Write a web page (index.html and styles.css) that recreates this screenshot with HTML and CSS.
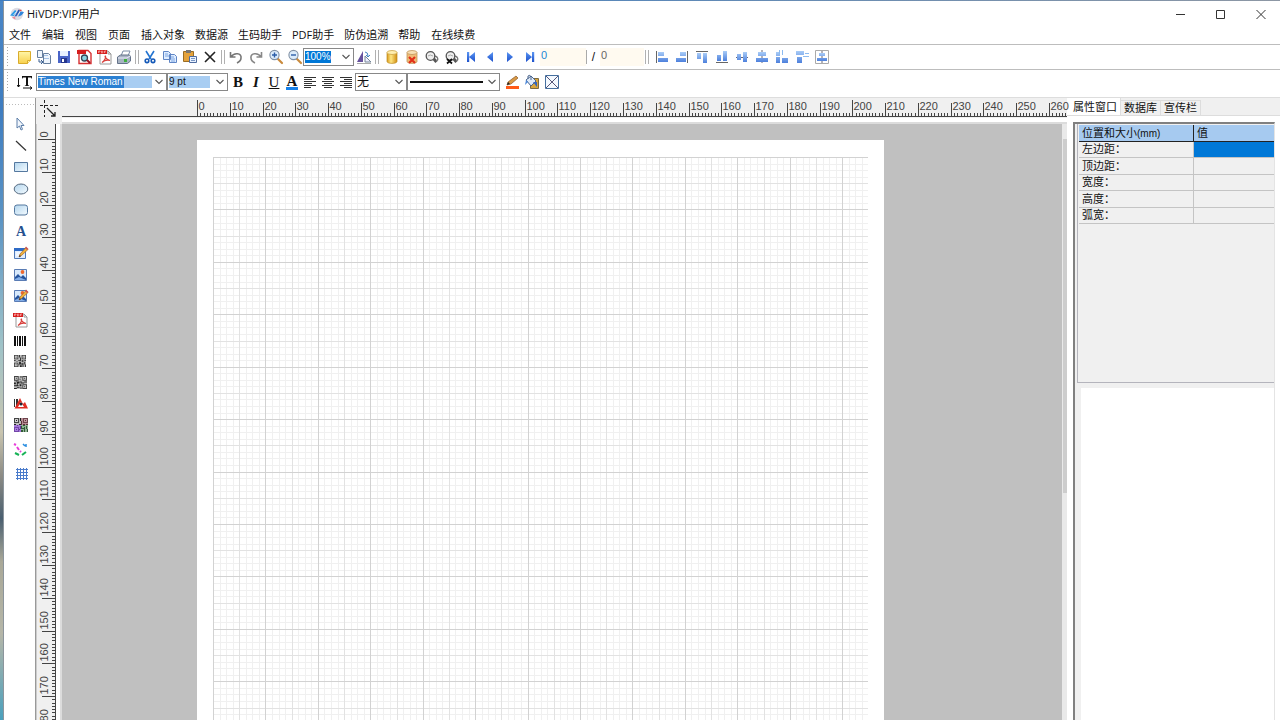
FILE: index.html
```html
<!DOCTYPE html>
<html lang="zh-CN">
<head>
<meta charset="utf-8">
<title>HiVDP:VIP用户</title>
<link rel="stylesheet" href="styles.css">
</head>
<body>
<svg class="defs" aria-hidden="true">
  <defs>
    <linearGradient id="gBlue" x1="0" y1="0" x2="0" y2="1"><stop offset="0" stop-color="#a9ccf7"/><stop offset="1" stop-color="#4d80dc"/></linearGradient>
    <linearGradient id="gNav" x1="0" y1="0" x2="0" y2="1"><stop offset="0" stop-color="#5b96f2"/><stop offset="1" stop-color="#1c50cc"/></linearGradient>
    <linearGradient id="gSky" x1="0" y1="0" x2="1" y2="1"><stop offset="0" stop-color="#b4d6ee"/><stop offset="1" stop-color="#f4fbff"/></linearGradient>
    <linearGradient id="gGold" x1="0" y1="0" x2="1" y2="0"><stop offset="0" stop-color="#d99a1c"/><stop offset=".4" stop-color="#ffe681"/><stop offset="1" stop-color="#d08d12"/></linearGradient>
    <linearGradient id="gNote" x1="0" y1="0" x2="0" y2="1"><stop offset="0" stop-color="#fff6a8"/><stop offset="1" stop-color="#f8d04c"/></linearGradient>
    <symbol id="chev" viewBox="0 0 8 6"><path d="M.5 1 4 4.5 7.5 1" fill="none" stroke="#555" stroke-width="1.1"/></symbol>
    <symbol id="qr" viewBox="0 0 14 14">
      <path d="M0 0h14v14H0z" fill="#bbb"/><path d="M0 0h5v5H0zM9 0h5v5H9zM0 9h5v5H0z" fill="#444"/><path d="M1 1h3v3H1zM10 1h3v3h-3zM1 10h3v3H1z" fill="#ccc"/><path d="M2 2h1v1H2zM11 2h1v1h-1zM2 11h1v1H2zM6 0h1v3H6zM7 3h1v3H7zM5 6h3v1H5zM0 6h2v1H0zM3 7h1v1H3zM9 6h2v2H9zM12 6h2v1h-2zM6 8h2v3H6zM8 10h2v1H8zM10 9h1v5h-1zM12 8h1v3h-1zM13 11h1v3h-1zM7 12h2v2H7zM5 11h1v1H5z" fill="#222"/>
    </symbol>
    <symbol id="pdf" viewBox="0 0 16 16"><path d="M4 2h8l3 3v10H4z" fill="#fff" stroke="#999"/><path d="M12 2v3h3" fill="none" stroke="#999"/><path d="M1 1h10v4H1z" fill="#d51d1d"/><path d="M2.500 4V2h1.500v1h-1M5.500 2v2h1l.5-1-.5-1zM8.500 4V2H10M8.500 3h1" fill="none" stroke="#ffb4b0" stroke-width=".7"/><path d="M6 13.500c3-2 4-5 3.500-6.500-1 0-.5 3 4.500 4.500-3-.7-6 .2-8 2" fill="none" stroke="#d8403c" stroke-width="1.200"/></symbol>
    <symbol id="mag" viewBox="0 0 16 16"><path d="m10 10 4 4" stroke="#c98a3c" stroke-width="2.200" stroke-linecap="round"/><circle cx="6.500" cy="6" r="4.600" fill="#dcecfb" stroke="#8090a4" stroke-width="1.100"/></symbol>
    <symbol id="magDark" viewBox="0 0 16 16"><path d="m9 9 3.500 4" stroke="#555" stroke-width="3"/><path d="M10 7c4 0 5 4 2 5" fill="none" stroke="#777" stroke-width="1.300"/><circle cx="6.500" cy="7" r="4.300" fill="#eee" stroke="#555" stroke-width="1.300"/><path d="M4 7q2-2 5 0" stroke="#aaa" fill="none"/></symbol>
    <symbol id="pic" viewBox="0 0 16 16"><path d="M2.500 2.500h12v11h-12z" fill="#d8e9fb" stroke="#5a7cb4"/><path d="m3 10 3-3 3 3 2-2 3 3v2H3z" fill="#24539d"/><path d="m3 12 4-2 7 3H3z" fill="#83aee8"/><circle cx="10.500" cy="5" r="1.900" fill="#ef682d"/></symbol>
    <symbol id="pen" viewBox="0 0 16 16"><path d="m6 12 1-3 6-6.500 2 2-6.500 6z" fill="#efb23c" stroke="#a7682d" stroke-width=".7"/><path d="m12 3 1-1.500L15.500 4 14 5z" fill="#c55"/><path d="m6 12 .8-2 1.200 1.200z" fill="#222"/></symbol>
  </defs>
</svg>

<div class="desktop">
<div class="window">
  <header class="titlebar">
    <svg class="app-logo" viewBox="0 0 14 14"><circle cx="7" cy="7" r="6.200" fill="#dcdce4"/><path d="M0 8.500 5 3l1.500 1L4 9z" fill="#2e9be6"/><path d="m4.500 9.500 4-7L10 3.500 7.500 9z" fill="#2858b4"/><path d="m8 9.500 2.500-5L14 5q-2 4-6 4.500z" fill="#2f86dc"/><path d="m9 2.500 3 .5-1.500 1.500z" fill="#e8483e"/><path d="m2 10.500 3-1 .5 3z" fill="#ef8794"/><path d="m3.500 8 3-3.500M7 9l3-4.500" stroke="#fff" stroke-width=".7"/></svg>
    <h1 class="app-title">HiVDP:VIP用户</h1>
    <div class="window-controls">
      <button aria-label="最小化"><svg viewBox="0 0 10 10"><path d="M0 5.500h9" /></svg></button>
      <button aria-label="最大化"><svg viewBox="0 0 10 10"><path d="M.5 1.500h8v8h-8z"/></svg></button>
      <button aria-label="关闭"><svg viewBox="0 0 10 10"><path d="m.5 1 9 9m0-9-9 9"/></svg></button>
    </div>
  </header>
  <nav class="menubar">
    <button>文件</button><button>编辑</button><button>视图</button><button>页面</button><button>插入对象</button><button>数据源</button><button>生码助手</button><button>PDF助手</button><button>防伪追溯</button><button>帮助</button><button>在线续费</button>
  </nav>

  <div class="toolbar toolbar-main">
    <span class="grip"></span>
    <button aria-label="新建"><svg viewBox="0 0 16 16"><path d="M2.500 2.500h12v9l-3 3h-9z" fill="url(#gNote)" stroke="#d9ac2c"/><path d="M11.500 14.500v-3h3" fill="#fff3b0" stroke="#d9ac2c"/></svg></button>
    <button aria-label="打开"><svg viewBox="0 0 16 16"><path d="M1.500 1.500h5v7h-5zM7.500 4.500h5l2 2v8h-7z" fill="#eef5fd" stroke="#667f9f"/><path d="M8 6h4v1H8zM8 9h5v1H8z" fill="#a5c2e6"/><path d="M3 10v3h3m-1-2 2 2-2 2" fill="none" stroke="#395e91"/></svg></button>
    <button aria-label="保存"><svg viewBox="0 0 16 16"><path d="M2 2h12v12H2z" fill="#4964c8"/><path d="M4 2h8v5H4z" fill="#e8f0ff"/><path d="M5 9h6v5H5z" fill="#26368d"/><path d="M6 10h2v3H6z" fill="#fff"/></svg></button>
    <button aria-label="预览PDF"><svg viewBox="0 0 16 16"><path d="M3 1.500h9l3 3v10H3z" fill="#fff" stroke="#d63031" stroke-width="1.400"/><path d="M1 1h9v4H1z" fill="#d51d1d"/><circle cx="8.500" cy="9" r="3" fill="#8cd3e0" stroke="#345" stroke-width="1.300"/><path d="m11 11 3 3" stroke="#912" stroke-width="2"/></svg></button>
    <button aria-label="导出PDF"><svg viewBox="0 0 16 16"><use href="#pdf"/></svg></button>
    <button aria-label="打印"><svg viewBox="0 0 16 16"><path d="m5 7 2-5h7l-2 5z" fill="#fff" stroke="#7a8ca5"/><path d="m1.500 8 3-2h9l1 2v4l-3 2.500h-10z" fill="#a7b3c2" stroke="#65738a"/><path d="M2 9h9l3-2" stroke="#eef" fill="none"/><path d="M8 10h3v3H8z" fill="#3fae3f"/></svg></button>
    <span class="sep"></span>
    <button aria-label="剪切"><svg viewBox="0 0 16 16"><path d="m4 2 5 8M12 2 7 10" stroke="#2374d1" stroke-width="1.600"/><circle cx="5" cy="11.800" r="1.800" fill="none" stroke="#1559b8" stroke-width="1.600"/><circle cx="11" cy="11.800" r="1.800" fill="none" stroke="#1559b8" stroke-width="1.600"/></svg></button>
    <button aria-label="复制"><svg viewBox="0 0 16 16"><path d="M1.500 2.500h5l2 2v6h-7zM7.500 5.500h5l2 2v6h-7z" fill="#dfedff" stroke="#5f85c5"/><path d="M3 5h3M3 7h4M9 8h3M9 10h4M9 12h4" stroke="#7da5e2"/></svg></button>
    <button aria-label="粘贴"><svg viewBox="0 0 16 16"><path d="M1.500 2.500h10v10h-10z" fill="#e5a33c" stroke="#9a6d25"/><path d="M4 1h5v3H4z" fill="#777"/><path d="M7.500 7.500h7v6h-7z" fill="#e9f2ff" stroke="#4f6c9f"/><path d="M9 9.500h4M9 11.500h4" stroke="#7997c4"/></svg></button>
    <button aria-label="删除"><svg viewBox="0 0 16 16"><path d="m3 3 10 10M13 3 3 13" stroke="#222" stroke-width="1.600"/></svg></button>
    <span class="sep"></span>
    <button aria-label="撤销"><svg viewBox="0 0 16 16"><path d="M2.500 3v5h5M3 8c3-5 11-4 10 1 0 2-2 4-4 5" fill="none" stroke="#777" stroke-width="1.600"/></svg></button>
    <button aria-label="重做"><svg viewBox="0 0 16 16"><path d="M13.500 3v5h-5M13 8C10 3 2 4 3 9c0 2 2 4 4 5" fill="none" stroke="#888" stroke-width="1.600"/></svg></button>
    <button aria-label="放大"><svg viewBox="0 0 16 16"><use href="#mag"/><path d="M4 6h5M6.500 3.500v5" stroke="#2b5da8" stroke-width="1.400"/></svg></button>
    <button class="tight" aria-label="缩小"><svg viewBox="0 0 16 16"><use href="#mag"/><path d="M4 6h5" stroke="#2b5da8" stroke-width="1.400"/></svg></button>
    <span class="combo combo-zoom"><select aria-label="缩放比例"><option>100%</option><option>200%</option></select><svg class="chev"><use href="#chev"/></svg></span>
    <button aria-label="镜像"><svg viewBox="0 0 16 16"><path d="M7 2v11H1z" fill="#66519d"/><path d="m9 7 6 6H9z" fill="#eef" stroke="#789"/><path d="M9 3q3 0 3 4m-2-1 2 2 2-2" fill="none" stroke="#4786c5"/><path d="M1 14.500h14" stroke="#aaa"/></svg></button>
    <span class="sep"></span>
    <button class="after-gap" aria-label="数据库"><svg viewBox="0 0 16 16"><path d="M3 3.500v9c0 2.500 10 2.500 10 0v-9z" fill="url(#gGold)" stroke="#bc8a1d" stroke-width=".7"/><ellipse cx="8" cy="3.500" rx="5" ry="2" fill="#ffeeb0" stroke="#c59a35" stroke-width=".7"/></svg></button>
    <button aria-label="断开数据库"><svg viewBox="0 0 16 16"><path d="M3 3.500v9c0 2.500 10 2.500 10 0v-9z" fill="#efbd78" stroke="#b98a4c" stroke-width=".7"/><ellipse cx="8" cy="3.500" rx="5" ry="2" fill="#f8e0b4" stroke="#b98a4c" stroke-width=".7"/><path d="m5 8 6 6m0-6-6 6" stroke="#e23018" stroke-width="2.200"/></svg></button>
    <button aria-label="查找"><svg viewBox="0 0 16 16"><use href="#magDark"/></svg></button>
    <button aria-label="取消查找"><svg viewBox="0 0 16 16"><use href="#magDark"/><path d="m3 10 5 4.500m0-4.500-5 4.500" stroke="#111" stroke-width="1.700"/></svg></button>
    <button class="slim" aria-label="第一条"><svg viewBox="0 0 16 16"><path d="M4 3h2.200v10H4zM12 3v10L6 8z" fill="url(#gNav)"/></svg></button>
    <button aria-label="上一条"><svg viewBox="0 0 16 16"><path d="M11 3v10L5 8z" fill="url(#gNav)"/></svg></button>
    <button aria-label="下一条"><svg viewBox="0 0 16 16"><path d="M5 3v10l6-5z" fill="url(#gNav)"/></svg></button>
    <button aria-label="最后一条"><svg viewBox="0 0 16 16"><path d="M4 3v10l6-5zM10 3h2.200v10H10z" fill="url(#gNav)"/></svg></button>
    <input class="rec rec-current" aria-label="当前记录" value="0">
    <span class="bar"></span><span class="slash">/</span>
    <input class="rec" aria-label="记录总数" value="0">
    <span class="sep"></span>
    <button class="after-gap" aria-label="左对齐"><svg viewBox="0 0 16 16"><path d="M2.500 2v12" stroke="#666"/><path d="M4 3h6v4H4zM4 9h10v4H4z" fill="url(#gBlue)"/></svg></button>
    <button aria-label="右对齐"><svg viewBox="0 0 16 16"><path d="M13.500 2v12" stroke="#666"/><path d="M6 3h6v4H6zM2 9h10v4H2z" fill="url(#gBlue)"/></svg></button>
    <button aria-label="顶对齐"><svg viewBox="0 0 16 16"><path d="M2 2.500h12" stroke="#666"/><path d="M3 4h4v6H3zM9 4h4v10H9z" fill="url(#gBlue)"/></svg></button>
    <button aria-label="底对齐"><svg viewBox="0 0 16 16"><path d="M2 13.500h12" stroke="#666"/><path d="M3 6h4v6H3zM9 2h4v10H9z" fill="url(#gBlue)"/></svg></button>
    <button aria-label="垂直居中"><svg viewBox="0 0 16 16"><path d="M2 8.500h12" stroke="#667"/><path d="M3 5h4v6H3zM9 3h4v10H9z" fill="url(#gBlue)"/></svg></button>
    <button aria-label="水平居中"><svg viewBox="0 0 16 16"><path d="M8 1v13" stroke="#667"/><path d="M4 3h8v4H4zM2 9h12v4H2z" fill="url(#gBlue)"/></svg></button>
    <button aria-label="水平等距"><svg viewBox="0 0 16 16"><path d="M2 3h4v4H2zM2 8h4v6H2zM8 9h6v5H8z" fill="url(#gBlue)"/><path d="M5.500 1v5M8.500 1v5" stroke="#8dbbf0"/></svg></button>
    <button aria-label="垂直等距"><svg viewBox="0 0 16 16"><path d="M2 2h8v4H2zM3 8h5v6H3z" fill="url(#gBlue)"/><path d="M11 4.500h4M9 7.500h6" stroke="#8dbbf0"/></svg></button>
    <button aria-label="页面居中"><svg viewBox="0 0 16 16"><path d="M1.500 1.500h13v13h-13z" fill="#fff" stroke="#aaa"/><path d="M8 2v12" stroke="#667"/><path d="M5 4h6v3H5zM3 9h10v3H3z" fill="url(#gBlue)"/></svg></button>
  </div>

  <div class="toolbar toolbar-format">
    <span class="grip"></span>
    <button class="direction" aria-label="文字方向"><svg viewBox="0 0 16 16"><path d="M1.500 4v9m-1.500-2 1.500 2L3 11M6 14h9m-2-1.500L15 14l-2 1.500" fill="none" stroke="#111"/><path d="M5 2h10v3l-1-1.500h-3V11l1.500 1h-5L9 11V3.500H6L5 5z" fill="#111"/></svg></button>
    <span class="combo combo-font"><select aria-label="字体"><option>Times New Roman</option><option>Arial</option></select><svg class="chev"><use href="#chev"/></svg></span>
    <span class="combo combo-size"><select aria-label="字号"><option>9 pt</option><option>12 pt</option></select><svg class="chev"><use href="#chev"/></svg></span>
    <button class="letter bold">B</button>
    <button class="letter italic">I</button>
    <button class="letter underline">U</button>
    <button class="letter color">A</button>
    <button class="slim" aria-label="文本左对齐"><svg viewBox="0 0 16 16"><path d="M2 3.500h12M2 5.500h8M2 7.500h12M2 9.500h8M2 11.500h12M2 13.500h7" stroke="#333"/></svg></button>
    <button class="slim" aria-label="文本居中"><svg viewBox="0 0 16 16"><path d="M2 3.500h12M4 5.500h8M2 7.500h12M4 9.500h8M2 11.500h12M4 13.500h8" stroke="#333"/></svg></button>
    <button class="slim" aria-label="文本右对齐"><svg viewBox="0 0 16 16"><path d="M2 3.500h12M6 5.500h8M2 7.500h12M6 9.500h8M2 11.500h12M6 13.500h8" stroke="#333"/></svg></button>
    <span class="combo combo-border"><select aria-label="边框"><option>无</option><option>有</option></select><svg class="chev"><use href="#chev"/></svg></span>
    <span class="combo combo-line"><select aria-label="线型"><option aria-label="实线"></option></select><span class="line-sample"></span><svg class="chev"><use href="#chev"/></svg></span>
    <button class="after-gap" aria-label="线条颜色"><svg viewBox="0 0 16 16"><path d="M2 12h13v3H2z" fill="#ff5a18"/><path d="m3 11 1-3 8-6 2 2-7 6z" fill="#d99a45" stroke="#86582b" stroke-width=".7"/><path d="m3 11 1-3 2 2z" fill="#222"/></svg></button>
    <button aria-label="填充颜色"><svg viewBox="0 0 16 16"><path d="M6.500 4.500h8v10h-8z" fill="#d9a63e" stroke="#7c6a3e"/><path d="m2 6 5-4 5 5-5 5z" fill="#dfeaf8" stroke="#4a658d"/><path d="M4 5V2q2-2 3 1v3" fill="none" stroke="#4a658d"/><path d="M9 8h4v5z" fill="#3465bb"/><path d="M2 6 1 11l3-3z" fill="#4d88da"/></svg></button>
    <button aria-label="无填充"><svg viewBox="0 0 16 16"><path d="M1.500 1.500h13v13h-13z" fill="#f4f9ff" stroke="#456f9f"/><path d="m2 2 12 12M14 2 2 14" stroke="#557"/></svg></button>
  </div>

  <main class="main">
    <aside class="toolbox" aria-label="工具箱">
      <button aria-label="选择"><svg viewBox="0 0 16 16"><path d="M4 2v10l2.500-2L8 14l1.500-.7L8 9.500h3z" fill="#f2f7fd" stroke="#5d7fa9"/></svg></button>
      <button aria-label="直线"><svg viewBox="0 0 16 16"><path d="m3 3 10 9.500" stroke="#333" stroke-width="1.200"/></svg></button>
      <button aria-label="矩形"><svg viewBox="0 0 16 16"><path d="M1.500 3.500h13v9h-13z" fill="url(#gSky)" stroke="#55789f"/></svg></button>
      <button aria-label="椭圆"><svg viewBox="0 0 16 16"><ellipse cx="8" cy="8" rx="6.800" ry="5" fill="url(#gSky)" stroke="#55697f"/></svg></button>
      <button aria-label="圆角矩形"><svg viewBox="0 0 16 16"><rect x="1.500" y="3" width="13" height="10" rx="2.500" fill="url(#gSky)" stroke="#55789f"/></svg></button>
      <button class="text-tool">A</button>
      <button aria-label="富文本"><svg viewBox="0 0 16 16"><path d="M1.500 3.500h11v10h-11z" fill="#dfedff" stroke="#5079b8"/><path d="M1 3h12v3H1z" fill="#2e6bc6"/><path d="M3 8h4M3 10h3" stroke="#fff"/><use href="#pen"/></svg></button>
      <button aria-label="图片"><svg viewBox="0 0 16 16"><use href="#pic" x="-1"/></svg></button>
      <button aria-label="可变图片"><svg viewBox="0 0 16 16"><use href="#pic" x="-1"/><use href="#pen"/></svg></button>
      <button class="drop" aria-label="PDF对象"><svg viewBox="0 0 16 16"><use href="#pdf" x="-1"/></svg></button>
      <button class="drop" aria-label="条形码"><svg viewBox="0 0 16 16"><path d="M1 3h2v10H1zM4 3h1v10H4zM6 3h2v10H6zM9 3h1v10H9zM11 3h2v10h-2z" fill="#111"/></svg></button>
      <button aria-label="二维码"><svg viewBox="0 0 16 16"><use href="#qr" width="12" height="12" x="1" y="2"/></svg></button>
      <button aria-label="汉信码"><svg viewBox="0 0 16 16"><g transform="rotate(90 7 8)"><use href="#qr" width="13" height="13" x="1" y="1"/></g></svg></button>
      <button aria-label="防伪码"><svg viewBox="0 0 16 16"><path d="M1 3h1v8H1zM3 3h2v8H3z" fill="#333"/><path d="M7 2 1.500 12.500H15L12 6l-2 2z" fill="#e02c22"/><path d="m8 6-3 5h6z" fill="#fff"/><circle cx="8" cy="8" r="1.500" fill="#1d2634"/></svg></button>
      <button aria-label="彩色码"><svg viewBox="0 0 16 16"><use href="#qr" width="14" height="14" x="1" y="1"/><path d="M1 8h7v7H1z" fill="#9347eb" opacity=".6"/><path d="M8 1h7v7H8z" fill="#b0475a" opacity=".4"/><path d="M8 8h7v7H8z" fill="#4ba957" opacity=".4"/></svg></button>
      <button class="spaced" aria-label="点阵"><svg viewBox="0 0 16 16"><path d="m1 2 2 1m1 2 2 3m1 1 1 1" stroke="#e83cda" stroke-width="2"/><path d="m2 11 4 2" stroke="#17b257" stroke-width="2"/><path d="m9 13 4-3" stroke="#17b257" stroke-width="2"/><path d="m10 2 2 2m1-2v3" stroke="#288de0" stroke-width="1.500"/></svg></button>
      <button class="spaced" aria-label="网格"><svg viewBox="0 0 16 16"><path d="M4.500 2v12M7.500 2v12M10.500 2v12M13.500 2v12M3 3.500h12M3 6.500h12M3 9.500h12M3 12.500h12" stroke="#4a7bcb"/></svg></button>
    </aside>

    <section class="workspace">
      <div class="ruler-corner"><svg viewBox="0 0 26 26"><path d="M4 7.500h18M8.500 2v17" stroke="#222" stroke-dasharray="3 2"/><path d="m11 10 8 8m-4 0h4v-4" fill="none" stroke="#222" stroke-width="1.300"/></svg></div>
      <div class="ruler-x"><svg id="rulerX"></svg></div>
      <div class="ruler-y"><svg id="rulerY"></svg></div>
      <div class="canvas"><div class="sheet"><svg id="grid"></svg></div></div>
      <div class="scrollbar"><div class="thumb"></div></div>
    </section>

    <aside class="inspector">
      <div class="tabs" role="tablist">
        <button class="tab active" role="tab" aria-selected="true">属性窗口</button><button class="tab" role="tab">数据库</button><button class="tab" role="tab">宣传栏</button>
      </div>
      <div class="inspector-body">
        <div class="properties">
          <table>
            <thead><tr><th>位置和大小<small>(mm)</small></th><th>值</th></tr></thead>
            <tbody>
              <tr><td>左边距：</td><td class="current"></td></tr>
              <tr><td>顶边距：</td><td></td></tr>
              <tr><td>宽度：</td><td></td></tr>
              <tr><td>高度：</td><td></td></tr>
              <tr><td>弧宽：</td><td></td></tr>
            </tbody>
          </table>
        </div>
        <div class="preview"></div>
      </div>
    </aside>
  </main>
</div>
</div>
<script src="script.js"></script>
</body>
</html>
```
FILE: styles.css
```css
* { box-sizing: border-box; }
body {
  margin: 0;
  font: 11px/16px "Liberation Sans", "Noto Sans CJK SC", sans-serif;
  color: #111;
  background: #fff;
}
button, input, select { font: inherit; color: inherit; border: 0; margin: 0; padding: 0; background: none; border-radius: 0; }
svg { display: block; }
.defs { position: absolute; width: 0; height: 0; }

.desktop {
  height: 100vh;
  padding: 1px 0 0 3px;
  background:
    linear-gradient(90deg, #3f7dc0, #5b88b8 50%, #8d97a4) 0 0 / 100% 1px no-repeat,
    linear-gradient(#4a86c6 0, #3f7dc0 15%, #5a93c4 30%, #9fc3c8 48%, #c9c5b0 60%, #8d8c85 66%, #4a5f70 72%, #a9a898 78%, #b5b6a8 88%, #4aa0bd 100%);
  overflow: hidden;
}
.window {
  display: flex;
  flex-direction: column;
  height: 100%;
  background: #fff;
  border-left: 1px solid #8c959c;
}

.titlebar { display: flex; align-items: center; height: 25px; padding-left: 6px; }
.app-logo { width: 14px; height: 14px; }
.app-title { flex: 1; margin: 0 0 0 3px; font: 11px/16px "Open Sans", "Noto Sans CJK SC", sans-serif; }
.window-controls { display: flex; margin-right: -1px; }
.window-controls button { width: 40px; height: 24px; display: grid; place-items: center; }
.window-controls svg { width: 10px; height: 10px; fill: none; stroke: #333; }

.menubar { display: flex; gap: 10px; height: 19px; padding-left: 5px; border-bottom: 1px solid #bdbdbd; font-family: "Open Sans", "Noto Sans CJK SC", sans-serif; }
.menubar button { min-width: 23px; text-align: left; white-space: nowrap; }

.toolbar { display: flex; align-items: center; flex: none; }
.toolbar-main { height: 25px; border-bottom: 1px solid #bdbdbd; }
.toolbar-format { height: 25px; padding-bottom: 1px; }
.toolbar button { flex: none; width: 20px; height: 20px; display: grid; place-items: center; }
.toolbar button svg { width: 16px; height: 16px; }
.toolbar .tight { width: 17px; }
.toolbar .slim { width: 18px; }
.toolbar .after-gap { margin-left: 2px; }
.grip { width: 1px; height: 20px; margin: 0 6px 0 3px; background: repeating-linear-gradient(#aaa 0 1px, #fff 1px 3px); }
.sep { flex: none; width: 4px; height: 14px; margin: 0 1px; border: solid #b0b0b0; border-width: 0 1px; }
.bar { width: 1px; height: 14px; background: #aaa; }
.slash { width: 13px; text-align: center; font-size: 12px; }
.rec { width: 44px; height: 18px; padding: 0 0 4px 1px; background: #fffaf0; color: #666; font-size: 11px; line-height: 14px; }
.rec-current { width: 46px; color: #2286d6; }

.combo { display: grid; align-items: center; height: 18px; border: 1px solid #888; }
.combo > * { grid-area: 1 / 1; }
.combo select { appearance: none; width: 100%; height: 16px; padding: 0 0 0 1px; font: 10px/16px "Liberation Sans", "Noto Sans CJK SC", sans-serif; }
.combo .chev { z-index: 1; justify-self: end; width: 8px; height: 6px; margin-right: 3px; pointer-events: none; }
.combo-zoom { width: 51px; }
.combo-zoom select { color: #fff; background: linear-gradient(#0078d7, #0078d7) 1px 2px / 26px 12px no-repeat; }
.combo-font { width: 131px; }
.combo-font select { color: #fff; background: linear-gradient(#2b80d2, #2b80d2) 1px 2px / 86px 12px no-repeat, linear-gradient(#a8cdf2, #a8cdf2) 1px 2px / 114px 12px no-repeat; }
.combo-size { width: 61px; margin-right: 1px; }
.combo-size select { background: linear-gradient(#a8cdf2, #a8cdf2) 1px 2px / 41px 12px no-repeat; }
.combo-border { width: 52px; }
.combo-border select { font-size: 12px; }
.combo-line { width: 93px; }
.line-sample { height: 2px; margin: 0 16px 0 2px; background: #111; pointer-events: none; }
.toolbar .direction { width: 22px; }
.toolbar .letter { width: 18px; font: 15px/18px "Liberation Serif", serif; }
.toolbar .bold { font-weight: 700; }
.toolbar .italic { font-weight: 700; font-style: italic; }
.toolbar .underline { text-decoration: underline; }
.toolbar .color { height: 15px; font-weight: 700; line-height: 12px; border-bottom: 3px solid #1681ea; width: 12px; margin: 0 3px; }

.main { display: flex; flex: 1; min-height: 0; margin-top: 2px; border-top: 1px solid #ddd; }

.toolbox { flex: none; width: 32px; padding: 15px 0 0 7px; border-right: 1px solid #999; background: repeating-linear-gradient(90deg, #bbb 0 1px, #fff 1px 3px) 2px 6px / 28px 1px no-repeat; }
.toolbox button { display: grid; place-items: center; width: 20px; height: 22px; }
.toolbox button:nth-child(even) { height: 21px; }
.toolbox svg { width: 16px; height: 16px; }
.toolbox .drop { padding-top: 4px; }
.toolbox .spaced { margin-top: 3px; }
.toolbox .text-tool { font: 700 14px/20px "Liberation Serif", serif; color: #26508f; }

.workspace { flex: 1; min-width: 0; display: grid; grid-template: 26px 1fr / 26px 1fr 5px; background: #f0f0f0; }
.ruler-corner { background: #f0f0f0; }
.ruler-corner svg { width: 26px; height: 26px; }
.ruler-x { position: relative; z-index: 1; grid-column: 2 / 4; background: linear-gradient(#f0f0f0 20px, #fff 20px 24px, #dcdcdc 24px); }
.ruler-y { min-height: 0; background: linear-gradient(90deg, #ccc 1px, #f0f0f0 1px 20px, #fff 20px 24px, #dcdcdc 24px); overflow: hidden; }
.ruler-x svg, .ruler-y svg { width: 100%; height: 100%; font: 11px "Liberation Sans", sans-serif; fill: #444; stroke: none; }
.ruler-x svg { overflow: visible; }
.ruler-x path, .ruler-y path { stroke: #444; fill: none; }
.canvas { min-height: 0; padding: 16px 0 0 135px; background: #c0c0c0; overflow: hidden; }
.sheet { width: 687px; height: 972px; padding: 17px 16px 15px; background: #fff; }
.sheet svg { width: 655px; height: 940px; }
.fine { stroke: #f0f0f0; }
.mid { stroke: #e2e2e2; }
.major { stroke: #d2d2d2; }
.scrollbar { padding: 15px 0 0 1px; background: #e9e9e9; }
.thumb { height: 61%; background: #cdcdcd; }

.inspector { flex: none; display: flex; flex-direction: column; width: 213px; padding-right: 5px; background: #fff; }
.tabs { display: flex; align-items: flex-end; height: 18px; margin: 0 -5px 6px 0; padding-left: 3px; border-bottom: 1px solid #ddd; background: linear-gradient(90deg, #fff 3px, #f0f0f0 3px); }
.tab { height: 15px; line-height: 15px; padding: 0 3px; white-space: nowrap; border: solid #ddd; border-width: 1px 1px 0 0; }
.tab.active { height: 18px; line-height: 16px; background: #fff; }
.inspector-body { flex: 1; display: flex; flex-direction: column; margin-left: 6px; padding-left: 2px; border: solid #808080; border-width: 2px 0 0 2px; border-right: 1px solid #e4e4e4; background: #f0f0f0; }
.properties { height: 259px; border: solid #b4b4bc; border-width: 0 0 1px 1px; padding: 1px 0 0 1px; }
.preview { flex: 1; margin: 5px 0 0 4px; background: #fff; }
table { width: 100%; border-collapse: separate; border-spacing: 0; table-layout: fixed; }
th, td { height: 16px; padding: 0 3px; line-height: 15px; text-align: left; font-weight: 400; white-space: nowrap; border: solid #c4c4c4; border-width: 0 1px 1px 0; }
tbody tr:nth-child(even) td { height: 17px; }
th { height: 17px; background: #a6caf0; border-color: #222; }
th:first-child { width: 115px; }
th small { font-size: 10px; line-height: 12px; }
th:last-child, td:last-child { border-right: 0; }
.current { background: #0078d7; }
```
FILE: script.js
```js
const MM = 3.277;
const NS = "http://www.w3.org/2000/svg";

function add(parent, name, attrs, text) {
  const node = document.createElementNS(NS, name);
  for (const key in attrs) node.setAttribute(key, attrs[key]);
  if (text !== undefined) node.textContent = text;
  parent.appendChild(node);
}

function drawRulerX() {
  const ruler = document.getElementById("rulerX");
  const width = ruler.parentElement.clientWidth;
  ruler.replaceChildren();
  let d = `M0 18.5H${width}`;
  for (let mm = 0; 135 + mm * MM < width - 1; mm++) {
    const x = Math.round(135 + mm * MM) + 0.5;
    const top = mm % 100 === 0 ? 2 : mm % 10 === 0 ? 5 : 15;
    d += `M${x} ${top}V18`;
    if (mm % 10 === 0) add(ruler, "text", { x: x + 1, y: 12 }, mm);
  }
  add(ruler, "path", { d });
}

function drawRulerY() {
  const ruler = document.getElementById("rulerY");
  const height = ruler.parentElement.clientHeight;
  ruler.replaceChildren();
  let d = `M19.5 0V${height}`;
  for (let mm = 0; 15 + mm * MM < height + 20; mm++) {
    const y = Math.round(15 + mm * MM) + 0.5;
    const left = mm % 100 === 0 ? 2 : mm % 10 === 0 ? 6 : 16;
    d += `M${left} ${y}H19`;
    if (mm % 10 === 0) add(ruler, "text", { transform: `translate(12 ${y - 2}) rotate(-90)` }, mm);
  }
  add(ruler, "path", { d });
}

function drawGrid() {
  const grid = document.getElementById("grid");
  const paths = { fine: "", mid: "", major: "" };
  const cell = 2 * MM;
  const kind = i => i % 8 === 0 ? "major" : i % 4 === 0 ? "mid" : "fine";
  for (let i = 0; i < 100; i++) {
    paths[kind(i)] += `M${Math.round(i * cell) + 0.5} 0V940`;
  }
  for (let i = 0; i < 144; i++) {
    paths[kind(i)] += `M0 ${Math.round(i * cell) + 0.5}H655`;
  }
  for (const key in paths) add(grid, "path", { class: key, d: paths[key] });
}

function drawRulers() {
  drawRulerX();
  drawRulerY();
}

drawGrid();
drawRulers();
window.addEventListener("resize", drawRulers);
```
